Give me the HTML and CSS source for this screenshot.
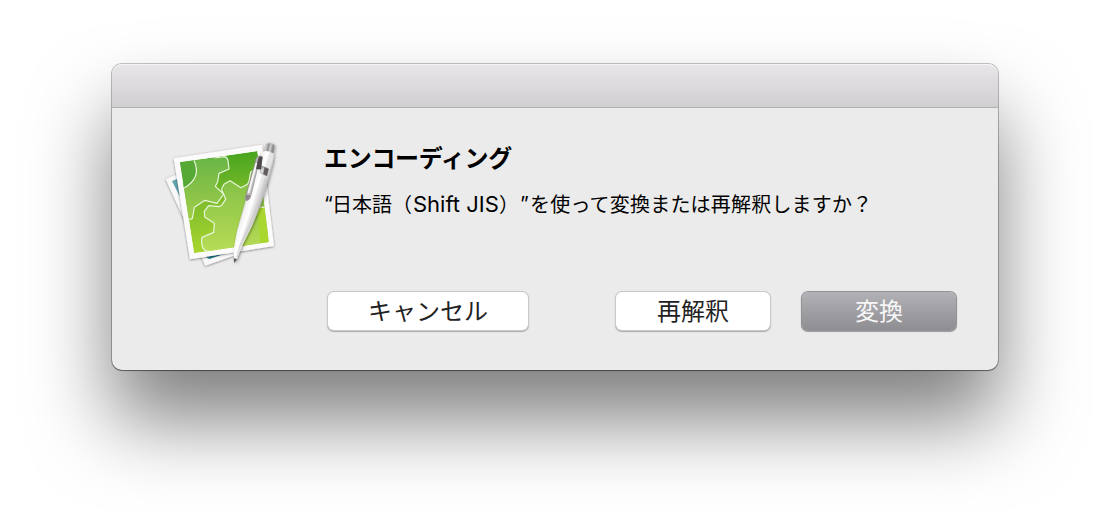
FILE: index.html
```html
<!DOCTYPE html>
<html lang="ja">
<head>
<meta charset="utf-8">
<title>エンコーディング</title>
<link rel="stylesheet" href="styles.css">
</head>
<body>
<section class="dialog" role="dialog">
  <header class="titlebar"></header>
  <div class="content">
    <svg class="app-icon" viewBox="0 0 405 435" aria-hidden="true">
      <defs>
        <linearGradient id="green" x1="0" y1="0" x2="0.1" y2="1"><stop offset="0" stop-color="#3ea01c"/><stop offset=".5" stop-color="#7dbc2b"/><stop offset="1" stop-color="#a9d62f"/></linearGradient>
        <linearGradient id="gear" x1="0" y1="0" x2="0" y2="1"><stop offset="0" stop-color="#68b546"/><stop offset="1" stop-color="#a3ce4a"/></linearGradient>
        <linearGradient id="gearLow" x1="0" y1="0" x2="0" y2="1"><stop offset="0" stop-color="#7dbd45"/><stop offset="1" stop-color="#b8dc55"/></linearGradient>
        <linearGradient id="pen" gradientUnits="userSpaceOnUse" x1="272" y1="210" x2="316" y2="224"><stop offset="0" stop-color="#d2d2d2"/><stop offset=".15" stop-color="#f4f4f4"/><stop offset=".45" stop-color="#fff"/><stop offset=".6" stop-color="#e6e6e6"/><stop offset=".85" stop-color="#e2e2e2"/><stop offset="1" stop-color="#b5b5b5"/></linearGradient>
        <linearGradient id="metal" x1="0" y1="0" x2="1" y2=".2"><stop offset="0" stop-color="#777"/><stop offset=".25" stop-color="#d8d8d8"/><stop offset=".45" stop-color="#888"/><stop offset=".65" stop-color="#d0d0d0"/><stop offset="1" stop-color="#777"/></linearGradient>
        <filter id="soft" x="-20%" y="-20%" width="140%" height="140%"><feDropShadow dx="0" dy="2" stdDeviation="2.5" flood-opacity=".5"/></filter>
        <filter id="penShadow" x="-30%" y="-20%" width="160%" height="140%"><feDropShadow dx="3" dy="2" stdDeviation="4" flood-opacity=".42"/></filter>
        <clipPath id="photo"><path d="M75 97 307 63 342 336 117 370Z"/></clipPath>
      </defs>
      <g filter="url(#soft)">
        <path fill="#f8f8f8" d="M32 148 68 132 250 372 151 407Z"/>
        <path fill="#63a4ad" d="M51 153 72 145 82 215Z"/>
        <path fill="#237b8a" d="M151 380 210 371 163 387Z"/>
      </g>
      <path filter="url(#soft)" fill="#fbfbfb" d="M56 85 321 44 357 348 105 388Z"/>
      <g clip-path="url(#photo)">
        <path fill="url(#green)" d="M75 97 307 63 342 336 117 370Z"/>
        <path fill="url(#gear)" d="M116 91 208 80 218 90 222 117 190 132 188 155 181 168 203 193 183 219 150 211 118 231 111 267 75 276V175Z"/>
        <path fill="url(#gearLow)" d="M206 164 226 152 259 173 281 160 283 135 295 124 350 120V232L325 233 340 365H154L141 354 137 323 175 307 177 279 147 260 148 242 162 227 192 230 209 208Z"/>
        <path fill="#55a934" d="M70 90 116 91Q141 145 88 175L70 178Z"/>
        <path fill="#a9d62f" d="M308 233H340V338L316 350Z"/>
        <g fill="none" stroke="#e7f5d9" stroke-width="3.6" stroke-linejoin="round">
          <path d="M117 91Q141 145 86 175"/>
          <path d="M178 84 208 80Q217 82 219 92L222 117 192 130 188 155 181 169 206 192 186 220 150 211 118 232 112 266 98 270"/>
          <path d="M298 122 287 126 282 154 278 162 258 173 225 152 207 163 200 178 212 208 201 225 192 230 161 227 148 244 149 261 178 280 176 307 141 322Q135 366 166 364"/>
          <path d="M306 230 330 233"/>
        </g>
      </g>
      <g filter="url(#penShadow)">
        <path fill="url(#metal)" stroke="#888" d="M334 42Q347 38 358 46L354 68 328 64Z"/>
        <path fill="url(#pen)" d="M326 64Q342 60 356 72L353 100 339 154 318 222 292 286 262 346 246 386 238 396 236 359 246 302 272 210 310 82Z"/>
        <path fill="#555" d="M236 385 246 387 238 399Z"/>
      </g>
      <path fill="#bbb" opacity=".45" d="M330 140 337 150 316 222 290 286 256 350 244 385 253 345 282 282 305 218Z"/>
      <path fill="#aaa" d="M316 104 342 116 336 140 314 128Z"/>
      <path fill="#4e484a" d="M309 84Q314 76 323 80L318 118 306 118Z"/>
      <path fill="#625d60" d="M329 111 341 117 336 138 325 132Z"/>
      <path fill="#d6d6d6" d="M317 119 327 113 324 130 315 128Z"/>
      <path fill="#bdbabc" stroke="#8b8989" stroke-width="2" stroke-linejoin="round" d="M304 84Q308 77 318 79L307 116 288 195Q286 209 276 212 268 211 271 202Z"/>
      <path fill="none" stroke="#f5f5f5" stroke-width="6" stroke-linecap="round" d="M304 102 281 187"/>
      <path fill="#4e484a" d="M310 84Q316 76 322 83L316 118 303 117Z"/>
      <path fill="#8d8588" d="M274 194 286 196Q284 209 276 211 269 207 274 194Z"/>
    </svg>
    <div class="main">
      <h1 class="title">エンコーディング</h1>
      <p class="message"><span class="latin open">“</span>日本語（<span class="latin name">Shift JIS</span>）<span class="latin close">”</span><span class="question">を使って変換または再解釈しますか？</span></p>
      <div class="actions">
        <button class="button cancel">キャンセル</button>
        <button class="button">再解釈</button>
        <button class="button primary">変換</button>
      </div>
    </div>
  </div>
</section>
</body>
</html>
```
FILE: styles.css
```css
* { box-sizing: border-box; }
body {
  margin: 0;
  height: 530px;
  padding: 64px 112px;
  overflow: hidden;
  background: #fff;
  font-family: "Noto Sans CJK JP", sans-serif;
}
.dialog {
  width: 886px;
  height: 306px;
  border-radius: 10px;
  background: #ebebeb;
  box-shadow: 0 0 0 1px rgba(0,0,0,.23), 0 1px 1px rgba(0,0,0,.35), 0 50px 80px rgba(0,0,0,.5);
}
.titlebar {
  height: 44px;
  border-radius: 10px 10px 0 0;
  border-bottom: 1px solid #b3b0b3;
  background: linear-gradient(#e8e6e9, #d1ced1);
  box-shadow: inset 0 1px 0 #f6f5f6;
}
.content { display: flex; padding: 22px 41px 0 43px; }
.app-icon { flex: none; width: 135px; height: 145px; }
.main { flex: 1; padding: 9px 0 0 34px; }
.title { margin: 0; font-size: 24px; line-height: 36px; font-weight: 700; letter-spacing: -.3px; color: #000; }
.message {
  display: flex;
  margin: 14px 0 0;
  font-size: 20px;
  line-height: 30px;
  color: #000;
  white-space: nowrap;
}
.latin { font-family: Inter, sans-serif; font-size: 22px; }
.open { width: 8px; font-size: 20px; }
.name { width: 87px; padding-left: 1px; }
.close { width: 11px; padding-left: 1px; font-size: 20px; }
.question { letter-spacing: .2px; }
.actions { display: flex; padding: 73px 0 0 4px; }
.button {
  width: 154px;
  height: 38px;
  padding: 0 0 2px;
  border: 0;
  border-radius: 6px;
  background: #fff;
  box-shadow: 0 0 0 1px #c9c9c9, 0 1px 1px 1px #aaa;
  font: 24px/34px "Noto Sans CJK JP", sans-serif;
  color: #222;
}
.cancel { width: 200px; margin-right: 88px; }
.primary {
  margin-left: 32px;
  color: #f7f7f7;
  background: linear-gradient(#b2b1b6, #8e8d92);
  box-shadow: 0 0 0 1px #929196, 0 1px 1px 1px #999;
}
```
